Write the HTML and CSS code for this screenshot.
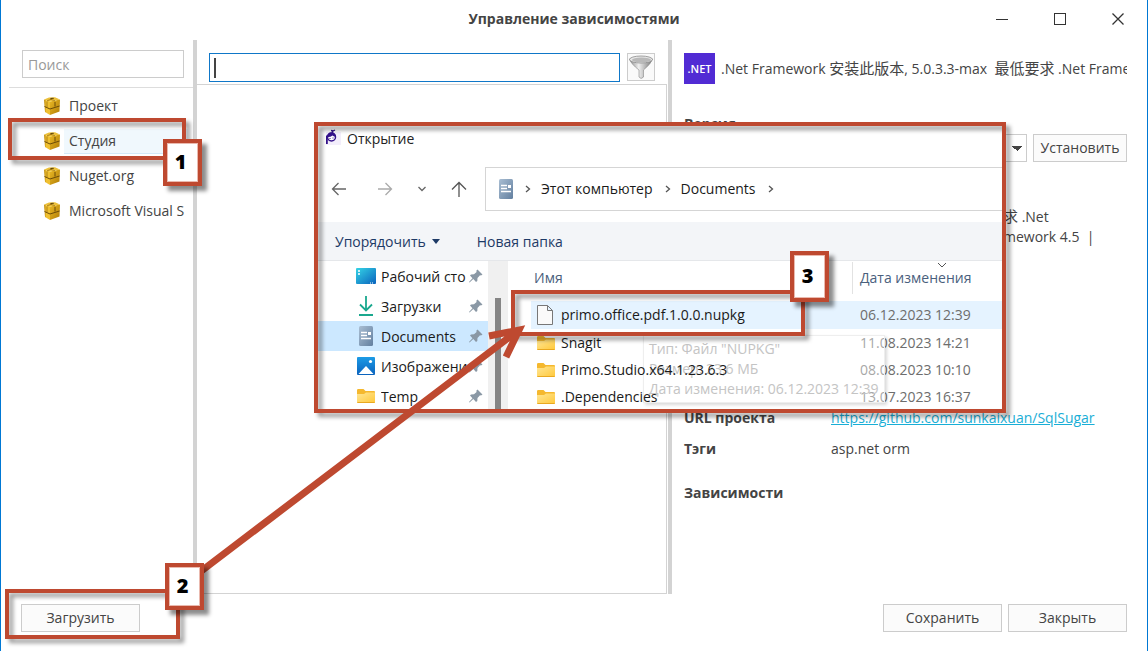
FILE: index.html
```html
<!DOCTYPE html>
<html lang="ru">
<head>
<meta charset="utf-8">
<title>Управление зависимостями</title>
<link rel="stylesheet" href="styles.css">
</head>
<body>
<svg class="sprite" aria-hidden="true">
  <defs>
    <linearGradient id="gold" x1="0" y1="0" x2="1" y2="0"><stop offset="0" stop-color="#b98508"/><stop offset=".4" stop-color="#f0c030"/></linearGradient>
    <linearGradient id="goldside" x1="0" y1="0" x2="1" y2="1"><stop offset="0" stop-color="#e9b826"/><stop offset="1" stop-color="#b07c04"/></linearGradient>
    <linearGradient id="metal" x1="0" y1="0" x2="1" y2="0"><stop offset="0" stop-color="#8a8a8a"/><stop offset=".4" stop-color="#efefef"/><stop offset="1" stop-color="#777"/></linearGradient>
    <linearGradient id="slate" x1="0" y1="0" x2="1" y2="1"><stop offset="0" stop-color="#a9bed3"/><stop offset="1" stop-color="#627f9f"/></linearGradient>
    <linearGradient id="desk" x1="0" y1="0" x2="1" y2="1"><stop offset="0" stop-color="#35d4e6"/><stop offset="1" stop-color="#0a63bd"/></linearGradient>
    <linearGradient id="yellow" x1="0" y1="0" x2="1" y2="1"><stop offset="0" stop-color="#ffe694"/><stop offset="1" stop-color="#ffc83a"/></linearGradient>
    <linearGradient id="sky" x1="0" y1="0" x2="0" y2="1"><stop offset="0" stop-color="#1c9be6"/><stop offset="1" stop-color="#0a62bd"/></linearGradient>
  </defs>
  <symbol id="i-package" viewBox="0 0 16 18">
    <path d="M0 2.500 6 4.500V18L1 15Z" fill="url(#gold)"/>
    <path d="M6 4.500 16 2.500 15.500 14.500 6 18Z" fill="url(#goldside)"/>
    <path d="M0 2.500 5 .5 11 .3 16 2.500 6 4.500Z" fill="#ecc03a"/>
    <path d="M.5 9.500 6 12 15.500 9M11 5V9.500" fill="none" stroke="#6b4b08" stroke-width="1"/>
    <path d="M3 4.500V10M3 3.800 8 2M11 3.800 6 2" fill="none" stroke="#94690c" stroke-width=".7"/>
    <path d="M6 1 9.500 .8 10 1.800 7 2Z" fill="#5f450a"/>
  </symbol>
  <symbol id="i-doc" viewBox="0 0 14 20">
    <rect width="14" height="20" rx="1.500" fill="url(#slate)"/>
    <path d="M2 6.500h6M2 9.500h6M2 12.500h10" stroke="#fff" stroke-width="1.300"/><rect x="9" y="6" width="3" height="3" fill="#fff"/>
  </symbol>
  <symbol id="i-folder" viewBox="0 0 18 14">
    <path d="M0 1.200Q0 0 1.200 0H6.500L8.500 2H17Q18 2 18 3V13Q18 14 17 14H1Q0 14 0 13Z" fill="#f5b82e"/>
    <path d="M0 5H7L9 3.500H18V13Q18 14 17 14H1Q0 14 0 13Z" fill="url(#yellow)"/>
    <path d="M0.500 13.500h17" stroke="#e9a820"/>
  </symbol>
  <symbol id="i-pin" viewBox="0 0 14 14">
    <path d="M8.500 0.500 13.500 5.500 12 6.500 11 6.200 8.500 9 8.300 12 7 13 4.300 10 0.500 13.500 0 13 3.500 9.200 1 6.500 2 5.500 5 5.300 7.600 3 7.300 1.800Z" fill="#8a98a5"/>
  </symbol>
  <symbol id="i-chev" viewBox="0 0 6 8"><path d="M1 1 4.500 4 1 7" fill="none" stroke="#555" stroke-width="1.300"/></symbol>
</svg>

<div class="window">
  <header class="titlebar">
    <h1 class="titlebar-text">Управление зависимостями</h1>
    <div class="titlebar-controls">
      <button class="ctl" aria-label="Свернуть"><svg width="14" height="14"><path d="M1 7.500h12" stroke="#333"/></svg></button>
      <button class="ctl" aria-label="Развернуть"><svg width="14" height="14"><rect x="1.500" y="1.500" width="11" height="11" fill="none" stroke="#333"/></svg></button>
      <button class="ctl" aria-label="Закрыть окно"><svg width="14" height="14"><path d="M1.500 1.500 12.500 12.500M12.500 1.500 1.500 12.500" stroke="#333" stroke-width="1.300"/></svg></button>
    </div>
  </header>

  <main class="panes">
    <nav class="sources">
      <div class="sources-search"><input class="field" type="text" placeholder="Поиск" aria-label="Поиск"></div>
      <ul class="source-list">
        <li class="source"><svg class="source-icon"><use href="#i-package"/></svg><span class="source-name">Проект</span></li>
        <li class="source source-active"><svg class="source-icon"><use href="#i-package"/></svg><span class="source-name">Студия</span></li>
        <li class="source"><svg class="source-icon"><use href="#i-package"/></svg><span class="source-name">Nuget.org</span></li>
        <li class="source"><svg class="source-icon"><use href="#i-package"/></svg><span class="source-name">Microsoft Visual S</span></li>
      </ul>
    </nav>
    <div class="splitter"></div>
    <section class="packages">
      <div class="packages-search">
        <div class="query"><span class="caret"></span><input class="query-input" type="text" aria-label="Поиск пакетов"></div>
        <button class="filter" aria-label="Фильтр"><svg width="24" height="24" viewBox="0 0 24 24"><path d="M.5 4Q2 9 10 15V22Q12 25 14.500 22V15Q22 9 23.500 4Z" fill="url(#metal)" stroke="#888" stroke-width=".6"/><ellipse cx="12" cy="4.500" rx="11.500" ry="3.500" fill="#e8e8e8" stroke="#8a8a8a" stroke-width=".8"/><ellipse cx="12.500" cy="5" rx="9.500" ry="2.500" fill="#b9b9b9"/></svg></button>
      </div>
      <div class="packages-list"></div>
    </section>
    <div class="splitter"></div>
    <section class="details">
      <div class="details-head"><span class="net-logo">.NET</span><span class="details-title">.Net Framework <span class="cjk" lang="zh">安装此版本</span>, 5.0.3.3-max&nbsp; <span class="cjk" lang="zh">最低要求</span> .Net Framework</span></div>
      <label class="strong version-label" for="version">Версия</label>
      <div class="version-row"><select id="version" class="version"><option></option></select><button class="btn btn-install">Установить</button></div>
      <p class="description"><span class="cjk" lang="zh">求</span> .Net<br>mework 4.5&nbsp; |</p>
      <dl class="facts">
        <dt class="strong">URL проекта</dt><dd><a class="link" href="https://github.com/sunkaixuan/SqlSugar">https://github.com/sunkaixuan/SqlSugar</a></dd>
        <dt class="strong">Тэги</dt><dd>asp.net orm</dd>
      </dl>
      <h2 class="strong deps">Зависимости</h2>
    </section>
  </main>

  <footer class="footer">
    <button class="btn">Загрузить</button>
    <div class="footer-right"><button class="btn">Сохранить</button><button class="btn">Закрыть</button></div>
  </footer>
</div>

<section class="dialog" aria-label="Открытие">
  <div class="dialog-title">
    <svg width="15" height="16" viewBox="0 0 15 16"><rect y="3" width="15" height="13" fill="#f3eefb"/><path d="M.9 15V6.500" stroke="#34128a" stroke-width="1.800"/><circle cx="5.500" cy="8" r="4" fill="#fff" stroke="#34128a" stroke-width="1.500"/><path d="M1.200 8Q1 3.500 5.500 3.500 9.500 3.500 10 7.500 8 8 6.500 6.500 4 8.500 1.200 8Z" fill="#34128a"/><path d="M6.500 4V2M5 1.500 7 2 9 1" stroke="#34128a" stroke-width="1.300" fill="none"/><path d="M4 9v1M7 8.500v1" stroke="#34128a"/></svg>
    <span>Открытие</span>
  </div>
  <div class="dialog-nav">
    <div class="nav-buttons">
      <button class="nav-btn" aria-label="Назад"><svg width="16" height="16"><path d="M15 8H1.500M7.500 2 1.500 8 7.500 14" fill="none" stroke="#666" stroke-width="1.300"/></svg></button>
      <button class="nav-btn" aria-label="Вперёд"><svg width="16" height="16"><path d="M1 8H14.500M8.500 2 14.500 8 8.500 14" fill="none" stroke="#aaa" stroke-width="1.300"/></svg></button>
      <button class="nav-btn nav-small" aria-label="Недавние"><svg width="10" height="6"><path d="M1.500 1 5 4.500 8.500 1" fill="none" stroke="#666" stroke-width="1.300"/></svg></button>
      <button class="nav-btn" aria-label="Вверх"><svg width="16" height="16"><path d="M8 16V1.500M1 8.500 8 1.500 15 8.500" fill="none" stroke="#555" stroke-width="1.300"/></svg></button>
    </div>
    <div class="address">
      <svg class="doc-icon"><use href="#i-doc"/></svg>
      <svg class="chev"><use href="#i-chev"/></svg><span>Этот компьютер</span>
      <svg class="chev"><use href="#i-chev"/></svg><span>Documents</span>
      <svg class="chev"><use href="#i-chev"/></svg>
    </div>
  </div>
  <div class="dialog-tools"><button class="tool">Упорядочить <svg width="8" height="5"><path d="M0 0h8L4 5Z" fill="#1d3a66"/></svg></button><button class="tool">Новая папка</button></div>
  <div class="dialog-body">
    <ul class="places">
      <li class="place"><span class="place-icon"><svg width="20" height="16"><rect width="20" height="16" rx="1" fill="url(#desk)"/><path d="M2 3h2M2 6h2" stroke="#fff" stroke-width="1.500"/><path d="M14 15h4" stroke="#fff" stroke-dasharray="1 1"/></svg></span><span class="place-name">Рабочий сто</span><svg class="pin"><use href="#i-pin"/></svg></li>
      <li class="place"><span class="place-icon"><svg width="16" height="20"><path d="M8 0V14M2 8.500 8 14.500 14 8.500M1 19H15" fill="none" stroke="#1aa88e" stroke-width="1.800"/></svg></span><span class="place-name">Загрузки</span><svg class="pin"><use href="#i-pin"/></svg></li>
      <li class="place place-active"><span class="place-icon"><svg class="doc-icon"><use href="#i-doc"/></svg></span><span class="place-name">Documents</span><svg class="pin"><use href="#i-pin"/></svg></li>
      <li class="place"><span class="place-icon"><svg width="18" height="18"><rect width="18" height="18" rx="1" fill="url(#sky)"/><path d="M1.500 17 9 9l7.500 8Z" fill="#fff"/><circle cx="13.500" cy="4.500" r="1.600" fill="#fff"/></svg></span><span class="place-name">Изображени</span><svg class="pin"><use href="#i-pin"/></svg></li>
      <li class="place"><span class="place-icon"><svg class="folder-icon"><use href="#i-folder"/></svg></span><span class="place-name">Temp</span><svg class="pin"><use href="#i-pin"/></svg></li>
    </ul>
    <div class="scroll"><div class="thumb"></div></div>
    <table class="files">
      <thead><tr><th class="col-name">Имя</th><th class="col-date"><span class="date-head">Дата изменения</span><svg class="sort" width="10" height="6"><path d="M1 1 5 5 9 1" fill="none" stroke="#555"/></svg></th></tr></thead>
      <tbody>
        <tr class="file-active"><td><span class="file"><svg class="page-icon" viewBox="0 0 16 20"><path d="M.5.5H10.500L15.500 5.500V19.500H.5ZM10.500.5V5.500H15.500" fill="#fafafa" stroke="#777"/></svg>primo.office.pdf.1.0.0.nupkg</span></td><td class="date">06.12.2023 12:39</td></tr>
        <tr><td><span class="file"><svg class="folder-icon"><use href="#i-folder"/></svg>Snagit</span></td><td class="date">11.08.2023 14:21</td></tr>
        <tr><td><span class="file"><svg class="folder-icon"><use href="#i-folder"/></svg>Primo.Studio.x64.1.23.6.3</span></td><td class="date">08.08.2023 10:10</td></tr>
        <tr><td><span class="file"><svg class="folder-icon"><use href="#i-folder"/></svg>.Dependencies</span></td><td class="date">13.07.2023 16:37</td></tr>
      </tbody>
    </table>
  </div>
  <div class="tooltip" role="tooltip">Тип: Файл "NUPKG"<br>Размер: 23,6 МБ<br>Дата изменения: 06.12.2023 12:39</div>
</section>

<div class="frame frame-dialog"></div>
<div class="frame frame-studio"></div>
<div class="frame frame-upload"></div>
<div class="frame frame-file"></div>
<svg class="arrow" width="350" height="260" viewBox="0 0 350 260"><path d="M5 250 321 10M294 14 324 8 311 35" fill="none" stroke="#be4930" stroke-width="7"/></svg>
<div class="mark mark-1">1</div>
<div class="mark mark-2">2</div>
<div class="mark mark-3">3</div>
</body>
</html>
```
FILE: styles.css
```css
* { box-sizing: border-box; }
body {
  margin: 0;
  position: relative;
  overflow: hidden;
  background: #fff;
  color: #444;
  font: 14px/20px "Open Sans", "Noto Sans CJK SC", sans-serif;
}
button, input, select { font: inherit; color: inherit; }
button { padding: 0; border: 0; background: none; }
ul, dl, dd, p, h1, h2 { margin: 0; padding: 0; list-style: none; }
svg { flex: none; display: block; }
.sprite { position: absolute; width: 0; height: 0; }

.window {
  display: flex;
  flex-direction: column;
  min-height: 100vh;
  border: solid #0078d4;
  border-width: 0 1px;
}
.titlebar {
  display: grid;
  grid-template-columns: 1fr auto 1fr;
  align-items: center;
  height: 40px;
  padding-bottom: 2px;
}
.titlebar-text { grid-column: 2; font-size: 14px; font-weight: 700; line-height: 20px; }
.titlebar-controls { display: flex; justify-content: flex-end; gap: 44px; padding-right: 22px; }
.ctl { width: 14px; height: 14px; }

.panes { flex: 1; display: grid; grid-template-columns: 192px 4px minmax(0, 471fr) 4px minmax(0, 475fr); }
.splitter { background: #d3d3d3; }

.sources { padding-left: 8px; min-width: 0; }
.sources-search { padding: 10px 9px 9px 13px; border-bottom: 1px solid #ddd; }
.field {
  display: block;
  width: 100%;
  height: 28px;
  padding: 0 5px;
  border: 1px solid #ccc;
  background: #fff;
}
.field::placeholder { color: #999; }
.source-list { padding-left: 5px; }
.source { display: flex; align-items: center; height: 35px; padding-left: 30px; }
.source-icon { width: 16px; height: 18px; }
.source-name { flex: 1; margin: 0 5px 0 4px; padding: 2px 0 2px 5px; white-space: nowrap; overflow: hidden; }
.source-active .source-name { background: #f0f8fd; box-shadow: 0 1px #d3e9f8; }

.packages { display: flex; flex-direction: column; }
.packages-search { display: flex; gap: 7px; padding: 13px 13px 2px 12px; }
.query { flex: 1; display: flex; align-items: center; height: 29px; padding-left: 4px; border: 1px solid #0f77c8; }
.caret { width: 2px; height: 20px; background: #444; }
.query-input { flex: 1; min-width: 0; height: 20px; border: 0; outline: 0; background: none; }
.filter { display: grid; place-items: center; width: 28px; height: 28px; border: 1px solid #ccc; background: #fafafa; }
.packages-list { flex: 1; margin-right: 1px; border: solid #d3d3d3; border-width: 1px 1px 1px 0; }

.details { min-width: 0; padding: 13px 20px 0 12px; }
.details-head { display: flex; align-items: center; gap: 6px; height: 31px; }
.net-logo { flex: none; width: 31px; height: 31px; background: #512bd4; color: #fff; font-size: 11px; font-weight: 600; line-height: 31px; text-align: center; }
.details-title { flex: 1; overflow: hidden; white-space: nowrap; }
.cjk { font-size: 15px; line-height: 1; }
.strong { font-size: 14px; font-weight: 700; }
.version-label { display: block; margin-top: 30px; }
.version-row { display: flex; gap: 6px; }
.version {
  flex: 1;
  height: 28px;
  border: 1px solid #ccc;
  border-radius: 0;
  appearance: none;
  background:
    linear-gradient(to bottom left, #444 50%, transparent 50%) right 9px center / 5px 5px no-repeat,
    linear-gradient(to bottom right, #444 50%, transparent 50%) right 4px center / 5px 5px no-repeat,
    #fff;
}
.btn { width: 119px; height: 28px; border: 1px solid #ccc; background: #fbfbfb; }
.btn-install { width: 94px; }
.description { margin-top: 45px; padding-left: 319px; }
.facts { display: grid; grid-template-columns: 147px 1fr; row-gap: 11px; margin-top: 161px; }
.link { color: #19aed6; }
.deps { margin-top: 24px; line-height: 20px; }

.footer { display: flex; justify-content: space-between; padding: 10px 20px 19px; }
.footer-right { display: flex; gap: 6px; }

.dialog {
  position: absolute;
  left: 318px;
  top: 126px;
  width: 684px;
  height: 283px;
  overflow: hidden;
  isolation: isolate;
  background: #fff;
  color: #1a1a1a;
}
.dialog-title { display: flex; gap: 6px; padding: 3px 8px; color: #222; }
.dialog-nav { display: flex; margin-top: 15px; padding-bottom: 11px; }
.nav-buttons { display: flex; align-items: center; width: 167px; padding-left: 13px; gap: 30px; }
.nav-btn { width: 16px; }
.nav-small { width: 10px; margin: 0 -6px; }
.address { flex: 1; display: flex; align-items: center; gap: 10px; height: 44px; padding-left: 13px; border: solid #d5d5d5; border-width: 1px 0 1px 1px; }
.doc-icon { width: 14px; height: 20px; }
.chev { width: 6px; height: 8px; margin-left: 2px; }
.dialog-tools { display: flex; gap: 37px; height: 39px; padding: 1px 0 0 17px; background: #f3f5f8; border-bottom: 1px solid #e5e7ea; color: #1d3a66; }
.tool { display: flex; align-items: center; gap: 6px; }
.dialog-body { display: grid; grid-template-columns: 170px 20px 1fr; height: 148px; }
.place { display: flex; align-items: center; height: 30px; padding: 0 5px 0 38px; }
.place-active { background: #cce8ff; }
.place-icon { display: grid; place-items: center; width: 20px; margin-right: 5px; }
.place-name { flex: 1; padding-top: 1px; overflow: hidden; white-space: nowrap; }
.pin { width: 14px; height: 14px; }
.scroll { padding: 37px 7px 0; background: #f0f0f0; overflow: hidden; }
.thumb { height: 120px; background: #858585; }
.files { width: 100%; align-self: start; border-collapse: collapse; table-layout: fixed; }
.files th, .files td { padding: 0; text-align: left; font-weight: 400; white-space: nowrap; }
.files th { height: 40px; padding-bottom: 6px; color: #4a607d; }
.files .col-name { padding-left: 26px; }
.col-date { width: 150px; position: relative; }
.date-head { display: block; height: 32px; padding-left: 7px; border-left: 1px solid #e2e2e2; line-height: 32px; }
.sort { position: absolute; left: 85px; top: 1px; }
.file { position: relative; z-index: 2; display: flex; align-items: center; height: 27px; gap: 6px; margin-left: 23px; padding-left: 6px; }
.file-active .file { height: 28px; gap: 8px; background: #e5f3ff; }
.file-active .date { background: #e5f3ff; }
.page-icon { width: 16px; height: 20px; }
.folder-icon { width: 18px; height: 14px; }
.files .date { padding-left: 8px; color: #6d6d6d; }
.tooltip {
  position: absolute;
  z-index: 1;
  left: 325px;
  top: 209px;
  padding: 3px 6px 3px 5px;
  border: 1px solid #eee;
  background: rgba(255, 255, 255, .4);
  box-shadow: 2px 2px 3px rgba(0, 0, 0, .15);
  color: #c4c4c4;
  white-space: nowrap;
}

.frame { position: absolute; border: 4px solid #be4930; filter: drop-shadow(4px 4px 2px rgba(0, 0, 0, .4)); pointer-events: none; }
.frame-dialog { left: 314px; top: 122px; width: 692px; height: 291px; }
.frame-studio { left: 8px; top: 118px; width: 178px; height: 42px; }
.frame-upload { left: 5px; top: 589px; width: 175px; height: 50px; }
.frame-file { left: 511px; top: 290px; width: 294px; height: 46px; }
.arrow { position: absolute; left: 195px; top: 322px; pointer-events: none; }
.mark {
  position: absolute;
  display: grid;
  place-items: center;
  width: 39px;
  height: 47px;
  padding: 0 4px 2px 0;
  border: 4px solid #be4930;
  background: #fff;
  box-shadow: 5px 5px 4px rgba(0, 0, 0, .45), inset 0 0 0 1px #eab9ae;
  color: #000;
  font: 800 20px/24px "Open Sans", sans-serif;
}
.mark-1 { left: 163px; top: 139px; }
.mark-2 { left: 165px; top: 563px; }
.mark-3 { left: 790px; top: 251px; height: 51px; }
```
